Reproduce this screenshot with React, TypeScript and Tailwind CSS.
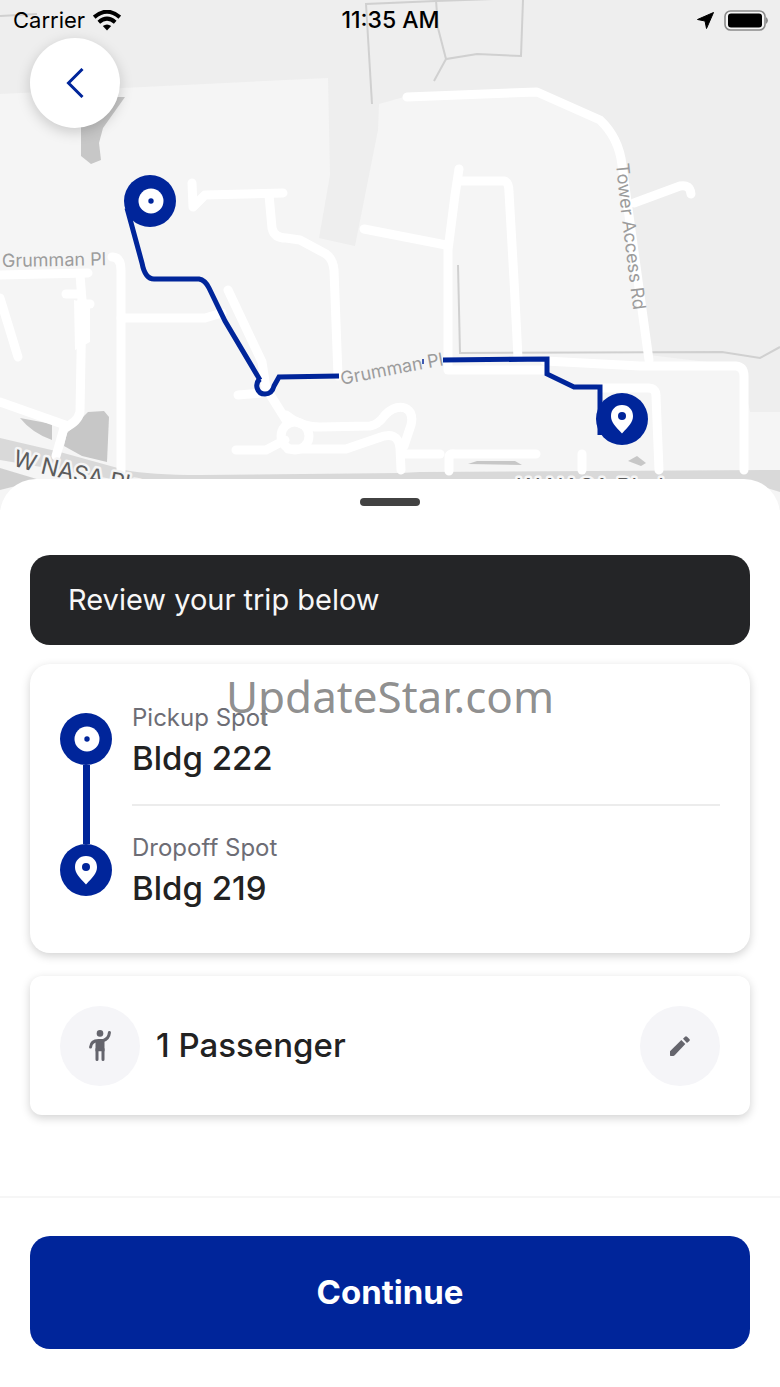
import { useState } from 'react';
import { clsx } from 'clsx';

const BLUE = '#00259a';

const ROADS = [
  'M407 97 L537 92 L600 120 Q619 138 622 165 L649 360',
  'M634 203 L680 186 Q690 184 691 194',
  'M192 183 L193 207 L205 195 L283 193',
  'M269 195 L272 228 Q274 238 286 238 L300 240 L326 254 Q333 259 334 270 L338 376',
  'M459 169 L455 195 L448 250 L448 368',
  'M460 181 L504 181 Q509 182 509 192 L514 280 L518 358',
  'M364 229 L446 245',
  'M0 275 L88 273',
  'M112 257 Q121 257 121 270 L121 478',
  'M121 318 L205 318 L222 313',
  'M80 275 L82 300 L80 412 Q78 422 64 428 L56 456',
  'M66 294 L80 294',
  'M80 304 L90 304',
  'M0 298 L18 357',
  'M0 402 L68 426',
  'M228 290 L262 362 L266 388 L286 420',
  'M238 395 L262 393',
  'M236 450 L266 450 L285 440',
  'M286 415 Q300 427 320 427 L370 426 Q378 425 385 415 Q395 405 405 408 Q414 412 411 425 L404 446',
  'M288 449 L346 449 L378 438 Q398 430 400 448 L401 470',
  'M403 454 L440 454',
  'M449 471 L449 457 Q449 453 455 454 L536 454',
  'M582 454 L582 470',
  'M600 388 L648 388 Q656 388 656 396 L659 470',
  'M448 370 L545 370',
  'M545 361 L640 366 L736 366 Q744 367 744 376 L744 470',
];

const BOUNDARIES = [
  'M0 16 L37 14',
  'M372 104 L366 4 L436 1 L522 -2',
  'M436 0 L438 28 L446 59 L477 54 L521 56 L523 0',
  'M446 59 L434 81',
  'M458 265 L460 353 L722 352 L760 358 L780 347',
];

function PickupIcon() {
  return (
    <svg viewBox="0 0 52 52" className="size-[52px]" aria-hidden="true">
      <circle cx="26" cy="26" r="26" fill={BLUE} />
      <circle cx="27" cy="26" r="12.5" fill="#fff" />
      <circle cx="27" cy="26" r="2.7" fill={BLUE} />
    </svg>
  );
}

function DropoffIcon() {
  return (
    <svg viewBox="0 0 52 52" className="size-[52px]" aria-hidden="true">
      <circle cx="26" cy="26" r="26" fill={BLUE} />
      <path d="M26 12 C19.5 12 15 16.7 15 23 C15 29 19 33 26 40.5 C33 33 37 29 37 23 C37 16.7 32.5 12 26 12 Z" fill="#fff" />
      <circle cx="26" cy="23" r="4" fill={BLUE} />
    </svg>
  );
}

function WavingPersonIcon() {
  return (
    <svg viewBox="0 0 24 24" className="size-9" fill="none" stroke="#65656d" strokeWidth="2" strokeLinecap="round" aria-hidden="true">
      <circle cx="12" cy="3.6" r="2.2" fill="#65656d" stroke="none" />
      <path d="M18.3 3 C18 6 16.7 7.6 14 8.4 L11 8.4 C8 8.5 6 10 5.7 12.7" />
      <path d="M9 8 H15 V15.5 H9 Z" fill="#65656d" stroke="none" />
      <path d="M10 14 V21 M14 14 V21" />
    </svg>
  );
}

function PencilIcon() {
  return (
    <svg viewBox="0 0 60 60" className="size-5" fill="#65656d" aria-hidden="true">
      <path d="M0 46 L34 12 L46 24 L14 58 Q12 60 10 60 L2 60 Q0 60 0 58 Z" />
      <path d="M39 8 L45 2 Q48 0 51 2 L58 9 Q61 12 58 15 L51 21 Z" />
    </svg>
  );
}

function StatusBar() {
  return (
    <div className="relative grid h-10 grid-cols-3 items-center pl-[13px] pr-3 text-[22px] text-black">
      <div className="flex items-center gap-2">
        <span>Carrier</span>
        <svg viewBox="0 0 28 21" className="h-[21px] w-7" fill="none" stroke="#000" strokeWidth="4" aria-hidden="true">
          <path d="M1.2 7.2 Q14 -3.8 26.8 7.2" />
          <path d="M5.8 12.2 Q14 5 22.2 12.2" />
          <path d="M14 20.5 L9.8 16 Q14 12.8 18.2 16 Z" fill="#000" stroke="none" />
        </svg>
      </div>
      <span className="text-center text-[23px] font-medium">11:35 AM</span>
      <div className="flex items-center justify-end gap-[10px]">
        <svg viewBox="0 0 17 17" className="size-[17px]" aria-hidden="true">
          <path d="M16.5 .5 L9.5 16.5 L8 9 L.5 7.5 Z" stroke="#000" strokeLinejoin="round" />
        </svg>
        <svg viewBox="0 0 44 21" className="h-[21px] w-11" aria-hidden="true">
          <rect x="1" y="1" width="40" height="19" rx="5.5" fill="#f6f6f6" stroke="#8a8a8a" strokeWidth="1.6" />
          <rect x="4" y="3.5" width="34" height="14" rx="3" />
          <path d="M42 7 Q46 10.500 42 14 Z" fill="#8a8a8a" />
        </svg>
      </div>
    </div>
  );
}

function TripMap() {
  return (
    <svg viewBox="0 0 780 510" preserveAspectRatio="xMidYMin slice" className="absolute inset-0 size-full" role="img" aria-label="Trip route map">
      <defs>
        <path id="label-grumman" d="M342 385 Q390 375 450 364" />
        <path id="label-tower" d="M616 164 Q622 225 636 330" />
        <path id="label-nasa" d="M12 465 Q50 478 160 497" />
      </defs>

      {/* land */}
      <rect width="780" height="510" fill="#eeeeee" />
      <path d="M0 94 L328 78 L330 175 L319 238 L355 246 L378 130 L379 104 L404 97 L537 92 L600 120 L622 160 L649 355 L740 366 L750 412 L780 412 L780 510 L0 510 Z" fill="#f5f5f5" />
      <g fill="#c7c7c7">
        <path d="M81 118 L81 156 L91 164 L101 160 L99 143 L103 128 L125 97 L117 97 Z" />
        <path d="M20 418 L52 424 L52 440 Q32 433 20 418 Z" />
        <path d="M64 446 L67 433 L88 412 L104 411 L109 417 L107 462 L82 456 Z" />
        <path d="M468 464 L477 461 L515 461 L522 465 Z" />
        <path d="M628 461 L637 456 L646 463 L641 466 Z" />
      </g>

      {/* highway */}
      <path d="M0 438 L60 452 L125 470 Q150 475 200 475 L400 473 L420 472 L780 470 L780 492 L740 480 L130 482 L0 460 Z" fill="#d9d9d9" />
      <path d="M0 468 L40 480 L0 490 Z" fill="#d0d0d0" />

      <g fill="none" stroke="#d0d0d0" strokeWidth="2">
        {BOUNDARIES.map((d) => <path key={d} d={d} />)}
      </g>
      <g fill="none" stroke="#fff" strokeWidth="9" strokeLinecap="round" strokeLinejoin="round">
        {ROADS.map((d) => <path key={d} d={d} />)}
        <circle cx="295" cy="436" r="14" />
      </g>
      <path d="M74 300 L90 304 L90 342 L75 350 Z" fill="#fff" />

      {/* route */}
      <g fill="none" stroke={BLUE} strokeWidth="5">
        <path d="M127 208 L142 263 Q145 279 154 279 L199 279 Q205 280 209 288 L225 321 L260 380" />
        <path d="M260 379 C254 384 257 394 265 394 C271 394 273 390 274 386 L279 377 L339 376" />
        <path d="M443 360 L547 359 L547 374 L574 387 L600 387 L600 435" />
        <path d="M423 359 V364" strokeWidth="1.5" />
      </g>

      <g fill="#9c9c9c" fontSize="18">
        <text x="2" y="267" transform="rotate(-1 2 267)">Grumman Pl</text>
        <text><textPath href="#label-grumman">Grumman Pl</textPath></text>
        <text><textPath href="#label-tower">Tower Access Rd</textPath></text>
      </g>
      <g fill="#5c5c5c" stroke="#f5f5f5" strokeWidth="5" strokeLinejoin="round" paintOrder="stroke" fontSize="23">
        <text><textPath href="#label-nasa">W NASA Pkwy</textPath></text>
        <text x="517" y="495">W NASA Blvd</text>
      </g>

      <svg x="124" y="175" width="52" height="52"><PickupIcon /></svg>
      <svg x="596" y="393" width="52" height="52"><DropoffIcon /></svg>
    </svg>
  );
}

function Stop({ label, place, divided }: { label: string; place: string; divided?: boolean }) {
  return (
    <div className={clsx('pb-[22px]', divided && 'mb-[26px] border-b-2 border-[#ececec]')}>
      <p className="text-2xl leading-8 text-[#6d6d75]">{label}</p>
      <p className="text-[33px] font-medium leading-[48px] text-[#222]">{place}</p>
    </div>
  );
}

export default function App() {
  const [passengers, setPassengers] = useState(1);

  return (
    <div className="relative flex min-h-screen flex-col bg-white font-['Inter','Noto_Sans',sans-serif]">
      <header className="relative h-[510px] overflow-hidden">
        <TripMap />
        <StatusBar />
        <button
          type="button"
          aria-label="Back"
          className="relative -mt-0.5 ml-[30px] flex size-[90px] items-center justify-center rounded-full bg-white shadow-[0_4px_14px_rgba(0,0,0,0.18)]"
        >
          <svg viewBox="0 0 18 30" className="h-[30px] w-[18px]" fill="none" stroke={BLUE} strokeWidth="3" aria-hidden="true">
            <path d="M16.5 1 L2.5 15 L16.5 29" />
          </svg>
        </button>
      </header>

      <main className="relative -mt-[31px] flex-1 rounded-t-[36px] bg-white px-[30px] pb-20 pt-[19px]">
        <div className="mx-auto h-2 w-[60px] rounded-full bg-[#424242]" />

        <h1 className="mt-[49px] flex h-[90px] items-center rounded-[20px] bg-[#242527] px-[38px] text-[29px] text-[#f7f7f7]">
          Review your trip below
        </h1>

        <section className="mt-[19px] flex gap-5 rounded-[20px] bg-white px-[30px] pb-[19px] pt-[38px] shadow-[0_3px_10px_rgba(0,0,0,0.18)]">
          <div className="flex flex-col items-center pb-9 pt-[11px]">
            <PickupIcon />
            <span className="h-[79px] w-[7px] bg-[#00259a]" />
            <DropoffIcon />
          </div>
          <div className="flex-1">
            <Stop label="Pickup Spot" place="Bldg 222" divided />
            <Stop label="Dropoff Spot" place="Bldg 219" />
          </div>
        </section>

        <section className="mt-[23px] flex h-[139px] items-center rounded-xl bg-white px-[30px] shadow-[0_3px_10px_rgba(0,0,0,0.18)]">
          <span className="flex size-20 items-center justify-center rounded-full bg-[#f5f5f8]">
            <WavingPersonIcon />
          </span>
          <p className="flex-1 pl-4 text-[33px] font-medium text-[#222]">
            {passengers} Passenger{passengers > 1 && 's'}
          </p>
          <button
            type="button"
            aria-label="Edit passengers"
            onClick={() => setPassengers((n) => (n % 4) + 1)}
            className="flex size-20 items-center justify-center rounded-full bg-[#f5f5f8]"
          >
            <PencilIcon />
          </button>
        </section>
      </main>

      <footer className="relative border-t-2 border-[#f6f6f6] bg-white px-[30px] pb-[38px] pt-[38px]">
        <button type="button" className="h-[113px] w-full rounded-[20px] bg-[#00259a] text-[33px] font-bold text-white">
          Continue
        </button>
      </footer>

      <p className="pointer-events-none absolute inset-x-0 top-[664px] text-center font-['Noto_Sans',sans-serif] text-[44px] leading-[64px] text-[#818181]/90">
        UpdateStar.com
      </p>
    </div>
  );
}
